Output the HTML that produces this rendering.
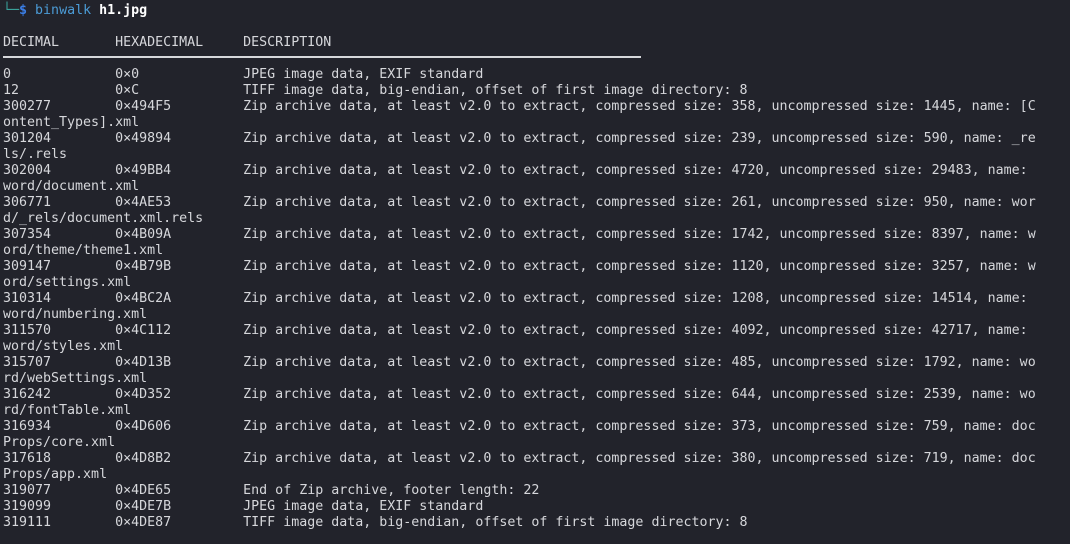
<!DOCTYPE html>
<html><head><meta charset="utf-8"><style>
html,body{margin:0;padding:0;background:#22232b;width:1070px;height:544px;overflow:hidden}
pre{margin:0;position:absolute;left:3px;top:3px;font-family:"DejaVu Sans Mono","Liberation Mono",monospace;font-size:13.3px;line-height:16px;color:#d6d7db;white-space:pre}
.t{color:#3aa39c}.d{color:#3b7ee6;font-weight:bold}.b{color:#4b9bd6}.w{color:#fff;font-weight:bold}
.rule{position:absolute;left:3px;top:56px;width:638px;height:2px;background:#d6d7db}
</style></head><body>
<pre><span class="t">└─</span><span class="d">$</span> <span class="b">binwalk</span> <span class="w">h1.jpg</span>

DECIMAL       HEXADECIMAL     DESCRIPTION

0             0×0             JPEG image data, EXIF standard
12            0×C             TIFF image data, big-endian, offset of first image directory: 8
300277        0×494F5         Zip archive data, at least v2.0 to extract, compressed size: 358, uncompressed size: 1445, name: [C
ontent_Types].xml
301204        0×49894         Zip archive data, at least v2.0 to extract, compressed size: 239, uncompressed size: 590, name: _re
ls/.rels
302004        0×49BB4         Zip archive data, at least v2.0 to extract, compressed size: 4720, uncompressed size: 29483, name:
word/document.xml
306771        0×4AE53         Zip archive data, at least v2.0 to extract, compressed size: 261, uncompressed size: 950, name: wor
d/_rels/document.xml.rels
307354        0×4B09A         Zip archive data, at least v2.0 to extract, compressed size: 1742, uncompressed size: 8397, name: w
ord/theme/theme1.xml
309147        0×4B79B         Zip archive data, at least v2.0 to extract, compressed size: 1120, uncompressed size: 3257, name: w
ord/settings.xml
310314        0×4BC2A         Zip archive data, at least v2.0 to extract, compressed size: 1208, uncompressed size: 14514, name:
word/numbering.xml
311570        0×4C112         Zip archive data, at least v2.0 to extract, compressed size: 4092, uncompressed size: 42717, name:
word/styles.xml
315707        0×4D13B         Zip archive data, at least v2.0 to extract, compressed size: 485, uncompressed size: 1792, name: wo
rd/webSettings.xml
316242        0×4D352         Zip archive data, at least v2.0 to extract, compressed size: 644, uncompressed size: 2539, name: wo
rd/fontTable.xml
316934        0×4D606         Zip archive data, at least v2.0 to extract, compressed size: 373, uncompressed size: 759, name: doc
Props/core.xml
317618        0×4D8B2         Zip archive data, at least v2.0 to extract, compressed size: 380, uncompressed size: 719, name: doc
Props/app.xml
319077        0×4DE65         End of Zip archive, footer length: 22
319099        0×4DE7B         JPEG image data, EXIF standard
319111        0×4DE87         TIFF image data, big-endian, offset of first image directory: 8</pre>
<div class="rule"></div>
</body></html>
